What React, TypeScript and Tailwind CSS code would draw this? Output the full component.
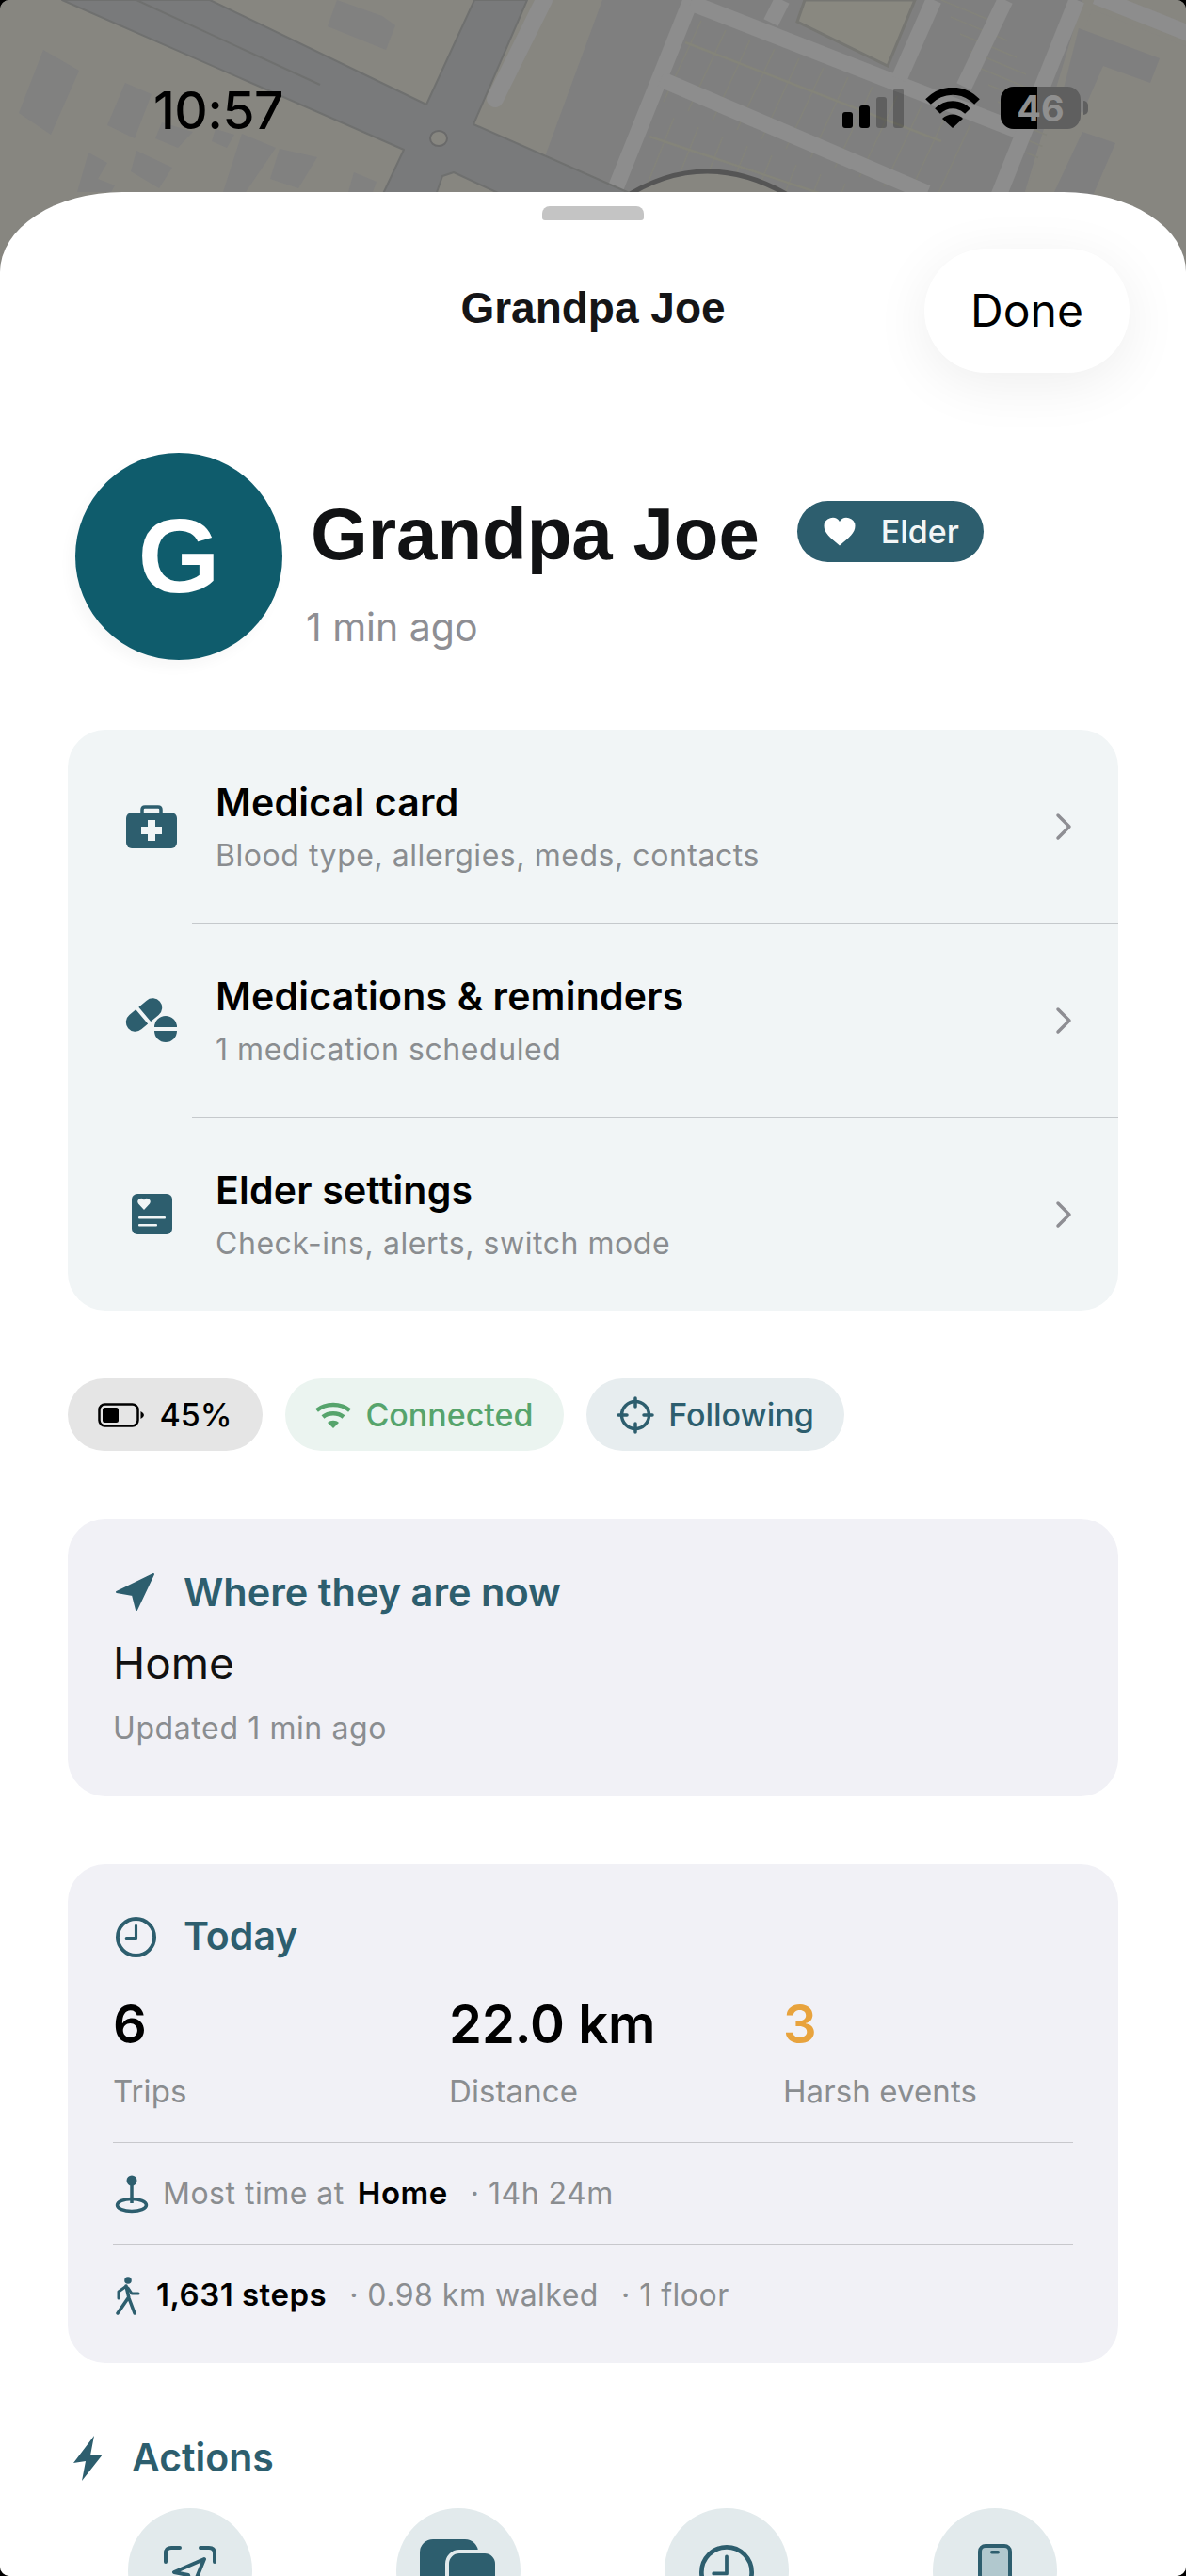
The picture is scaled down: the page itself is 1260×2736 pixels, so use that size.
import React from "react";

const TEAL = "#2d5e6e";

// Street map sitting behind the sheet, dimmed like a modal backdrop
function MapBackdrop() {
  const buildings = [
    "46,53 84,75 54,143 20,120",
    "133,88 161,100 143,147 114,133",
    "165,147 189,157 205,140 172,130",
    "257,142 293,157 261,204 237,204",
    "297,158 337,167 317,200 287,190",
    "145,160 183,178 169,200 139,182",
    "94,162 114,173 104,190 122,197 118,204 82,204",
    "376,183 400,193 396,204 370,204",
    "358,0 406,17 420,27 410,53 348,28",
    "229,137 249,143 241,157 225,150",
  ];
  const crossLines = Array.from({ length: 12 }, (_, i) => i);
  return (
    <svg className="absolute inset-0" width="1260" height="300" viewBox="0 0 1260 300">
      <rect width="1260" height="300" fill="#878680" />
      {buildings.map((points) => (
        <polygon key={points} points={points} fill="#818180" />
      ))}
      <polygon points="640,0 1150,0 1060,300 530,300" fill="#7f7f7f" />
      <polygon points="855,0 972,0 943,70 847,23" fill="#898880" stroke="#767672" strokeWidth="3" />
      {crossLines.map((i) => (
        <g key={i} stroke="#83837b" strokeWidth="1.5">
          <line x1={745 + i * 26} y1={22 + i * 10} x2={705 + i * 26} y2={108 + i * 10} />
          <line x1={690 + i * 26} y1={115 + i * 10} x2={650 + i * 26} y2={215 + i * 10} />
          <line x1={1000 + i * 10} y1={i * 18} x2={1060 + i * 10} y2={25 + i * 18} />
        </g>
      ))}
      <line x1="728" y1="45" x2="1000" y2="150" stroke="#84847a" strokeWidth="2.5" />
      <line x1="690" y1="145" x2="960" y2="235" stroke="#84847a" strokeWidth="2.5" />
      <g stroke="#8d8d8d" fill="none" strokeWidth="17">
        <path d="M734 0 L650 210" />
        <path d="M734 3 L1085 140" />
        <path d="M702 84 L985 205" />
        <path d="M831 0 L819 24" />
        <path d="M992 0 L955 84" />
        <path d="M1068 0 L1024 92" />
      </g>
      <polygon points="1160,10 1262,50 1262,300 1055,300" fill="#878680" />
      <polygon points="1146,30 1232,62 1222,88 1172,70 1150,120 1126,110" fill="#7f7f7f" />
      <polygon points="1150,140 1185,152 1160,210 1120,204" fill="#7f7f7f" />
      <path d="M1164 -4 L1264 36" stroke="#8d8d8d" strokeWidth="17" />
      <path d="M1144 0 L1060 210" stroke="#8d8d8d" strokeWidth="17" />
      <path
        d="M66 0 L429 159 L405 210 L462 210 L470 187 L482 183 L540 210 L680 210 L503 132 L560 0 L504 0 L453 111 L223 0 Z"
        fill="#797a7b"
        stroke="#6f706f"
        strokeWidth="2"
        strokeLinejoin="round"
      />
      <path d="M145 0 L340 90" stroke="#6f706f" strokeWidth="2" fill="none" />
      <path d="M578 0 L526 105" stroke="#8d8d8d" strokeWidth="18" strokeLinecap="round" />
      <ellipse cx="466" cy="147" rx="9" ry="8" fill="#878680" stroke="#6a6a6a" strokeWidth="2" />
      <path d="M660 212 Q750 152 845 212" fill="#878680" stroke="#555" strokeWidth="5" />
    </svg>
  );
}

function StatusBar() {
  return (
    <div className="relative flex h-[204px] items-start justify-between">
      <span className="mt-[85px] ml-[163px] text-[55px] leading-[64px] font-medium tracking-[-0.5px] text-black">
        10:57
      </span>
      <div className="mt-[92px] mr-[104px] flex items-start">
        <svg width="66" height="44" viewBox="0 0 66 44" className="mt-[1px]">
          <rect x="0" y="26" width="11" height="17" rx="3" fill="#000" />
          <rect x="18" y="19" width="11" height="24" rx="3" fill="#000" />
          <rect x="36" y="10" width="11" height="33" rx="3" fill="#000" fillOpacity="0.25" />
          <rect x="54" y="1" width="11" height="42" rx="3" fill="#000" fillOpacity="0.25" />
        </svg>
        <svg width="58" height="44" viewBox="0 0 58 44" className="mt-[1px] ml-[22px]">
          <g fill="none" stroke="#000" strokeWidth="8">
            <path d="M3 15 C18 0 40 0 55 15" />
            <path d="M13 25 C22 16 36 16 45 25" />
          </g>
          <path d="M18 33 C24 27 34 27 40 33 L29 43 Z" fill="#000" />
        </svg>
        <div className="relative ml-[22px] flex h-[45px] w-[85px] items-center justify-center overflow-hidden rounded-[14px] bg-[#5f5f5f]">
          <div className="absolute inset-y-0 left-0 w-[39px] bg-black" />
          <span className="relative text-[38px] leading-none font-bold text-[#8f8f8f]">46</span>
        </div>
        <div className="mt-[15px] ml-[3px] h-[15px] w-[5px] rounded-r-full bg-[#5f5f5f]" />
      </div>
    </div>
  );
}

function MedicalIcon() {
  return (
    <svg width="54" height="46" viewBox="0 0 54 46">
      <path d="M17 9 V5 Q17 2 20 2 H34 Q37 2 37 5 V9" fill="none" stroke={TEAL} strokeWidth="3.5" />
      <rect x="0" y="8" width="54" height="38" rx="6" fill={TEAL} />
      <path d="M23 16 H31 V23 H38 V31 H31 V38 H23 V31 H16 V23 H23 Z" fill="#f1f5f6" />
    </svg>
  );
}

function PillsIcon() {
  return (
    <svg width="56" height="48" viewBox="0 0 56 48">
      <g transform="rotate(-40 20 18)" fill={TEAL}>
        <path d="M17 8 H8 A10 10 0 0 0 8 28 H17 Z" />
        <path d="M21 8 H32 A10 10 0 0 1 32 28 H21 Z" />
      </g>
      <path d="M31 31 A12 12 0 0 1 55 31 Z" fill={TEAL} />
      <path d="M31 35 A12 12 0 0 0 55 35 Z" fill={TEAL} />
    </svg>
  );
}

function ElderCardIcon() {
  return (
    <svg width="43" height="43" viewBox="0 0 43 43">
      <rect width="43" height="43" rx="6" fill={TEAL} />
      <path d="M13 17 L7 10.5 A3.6 3.6 0 0 1 13 6.5 A3.6 3.6 0 0 1 19 10.5 Z" fill="#f1f5f6" />
      <rect x="7" y="24" width="29" height="2.5" rx="1" fill="#f1f5f6" />
      <rect x="7" y="32" width="20" height="2.5" rx="1" fill="#f1f5f6" />
    </svg>
  );
}

function Chevron() {
  return (
    <svg width="18" height="30" viewBox="0 0 18 30" fill="none" stroke="#8e8e93" strokeWidth="3.5" strokeLinecap="round" strokeLinejoin="round">
      <path d="M3 3 L15 15 L3 27" />
    </svg>
  );
}

function ClockIcon({ size, stroke }: { size: number; stroke: number }) {
  return (
    <svg width={size} height={size} viewBox="0 0 42 42" fill="none" stroke={TEAL} strokeWidth={stroke} strokeLinecap="round" strokeLinejoin="round">
      <circle cx="21" cy="21" r={21 - stroke / 2} />
      <path d="M21 9 V22 H11" strokeWidth={stroke * 0.8} />
    </svg>
  );
}

function MenuRow({ icon, title, detail }: { icon: React.ReactNode; title: string; detail: string }) {
  return (
    <div className="flex h-[205px] items-center">
      <div className="ml-[36px] flex w-[106px] justify-center">{icon}</div>
      <div className="ml-[15px] flex-1">
        <div className="mt-[1px] text-[41px] leading-[50px] font-semibold tracking-[0.2px] text-black">{title}</div>
        <div className="mt-[11px] text-[32px] leading-[42px] tracking-[0.55px] text-[#8a8d90]">{detail}</div>
      </div>
      <div className="mr-[49px]">
        <Chevron />
      </div>
    </div>
  );
}

const menuRows = [
  { icon: <MedicalIcon />, title: "Medical card", detail: "Blood type, allergies, meds, contacts" },
  { icon: <PillsIcon />, title: "Medications & reminders", detail: "1 medication scheduled" },
  { icon: <ElderCardIcon />, title: "Elder settings", detail: "Check-ins, alerts, switch mode" },
];

const stats = [
  { value: "6", label: "Trips", color: "text-black" },
  { value: "22.0 km", label: "Distance", color: "text-black" },
  { value: "3", label: "Harsh events", color: "text-[#e8a33d]" },
];

function ActionIcons() {
  return (
    <div className="mt-[28px] grid grid-cols-4 pr-[61px] pl-[59px]">
      <div className="flex h-[132px] w-[132px] justify-center justify-self-center rounded-full bg-[#e2eaec] pt-[40px]">
        <svg width="56" height="56" viewBox="0 0 56 56" fill="none" stroke={TEAL} strokeWidth="4" strokeLinecap="round" strokeLinejoin="round">
          <path d="M2 17 V8 Q2 2 8 2 H17" />
          <path d="M39 2 H48 Q54 2 54 8 V17" />
          <path d="M43 14 L11 28 L26 31 L30 46 Z" />
        </svg>
      </div>
      <div className="flex h-[132px] w-[132px] justify-center justify-self-center rounded-full bg-[#e2eaec] pt-[33px]">
        <svg width="82" height="70" viewBox="0 0 82 70">
          <rect x="0" y="0" width="62" height="60" rx="14" fill={TEAL} />
          <rect x="29" y="13" width="53" height="60" rx="13" fill={TEAL} stroke="#e2eaec" strokeWidth="4" />
        </svg>
      </div>
      <div className="flex h-[132px] w-[132px] justify-center justify-self-center rounded-full bg-[#e2eaec] pt-[39px]">
        <ClockIcon size={58} stroke={3.4} />
      </div>
      <div className="flex h-[132px] w-[132px] justify-center justify-self-center rounded-full bg-[#e2eaec] pt-[38px]">
        <svg width="36" height="62" viewBox="0 0 36 62">
          <rect x="2" y="2" width="32" height="58" rx="6" fill="#b1c8ce" stroke={TEAL} strokeWidth="4" />
          <rect x="13" y="7" width="10" height="3.5" rx="1.7" fill={TEAL} />
        </svg>
      </div>
    </div>
  );
}

export default function App() {
  return (
    <div className="h-[2736px] w-[1260px] overflow-hidden bg-black font-['Inter',sans-serif]">
      <div className="relative h-full overflow-hidden rounded-[10px] bg-[#878680]">
        <MapBackdrop />
        <StatusBar />
        <div className="relative h-[2532px] rounded-t-[130px_85px] bg-white">
          <div className="mx-auto h-[15px] w-[108px] translate-y-[15px] rounded-t-[8px] rounded-b-[3px] bg-[#c4c4c4]" />

          <div className="mt-[45px] grid h-[132px] grid-cols-[1fr_auto_1fr] items-center">
            <div />
            <h2 className="-mt-[6px] font-['Liberation_Sans',sans-serif] text-[46px] font-bold text-[#151517]">Grandpa Joe</h2>
            <button className="mr-[60px] h-[132px] w-[218px] justify-self-end rounded-[66px] bg-white text-[48px] text-black shadow-[0_12px_60px_rgba(0,0,0,0.07)]">
              Done
            </button>
          </div>

          <div className="mt-[85px] ml-[80px] flex items-start">
            <div className="flex h-[220px] w-[220px] items-center justify-center rounded-full bg-[#0f5c6c] font-['Liberation_Sans',sans-serif] text-[112px] font-bold text-white shadow-[-6px_8px_14px_rgba(0,0,0,0.03)]">
              G
            </div>
            <div className="ml-[30px] pt-[46px]">
              <div className="flex items-center">
                <h1 className="font-['Liberation_Sans',sans-serif] text-[78px] leading-[80px] font-bold text-[#111214]">Grandpa Joe</h1>
                <div className="ml-[40px] -mt-[6px] flex h-[65px] w-[198px] items-center justify-center rounded-full bg-[#2d5e6e] text-[34px] font-medium text-[#f2f6f7]">
                  <svg width="38" height="33" viewBox="0 0 24 22" fill="#fff" className="mr-[25px]">
                    <path d="M12 21 C5 15 1 12 1 7 A6 6 0 0 1 12 4 A6 6 0 0 1 23 7 C23 12 19 15 12 21 Z" />
                  </svg>
                  Elder
                </div>
              </div>
              <div className="mt-[34px] -ml-[5px] text-[41px] leading-[50px] text-[#8e8e93]">1 min ago</div>
            </div>
          </div>

          <div className="mx-[72px] mt-[74px] rounded-[40px] bg-[#f1f5f6]">
            {menuRows.map((row, index) => (
              <div key={row.title}>
                {index > 0 && <div className="ml-[132px] h-px bg-[#c5c9cc]" />}
                <MenuRow {...row} />
              </div>
            ))}
          </div>

          <div className="mx-[72px] mt-[72px] flex gap-[24px] text-[34px] font-medium">
            <div className="flex h-[77px] w-[207px] items-center justify-center rounded-full bg-[#e5e5e5] text-black">
              <svg width="50" height="26" viewBox="0 0 50 26" className="mr-[15px]">
                <rect x="1.5" y="1.5" width="41" height="23" rx="6" fill="none" stroke="#000" strokeWidth="2.5" />
                <rect x="5" y="5" width="17" height="16" rx="2.5" fill="#000" />
                <path d="M45.5 9 Q49 11 49 13 Q49 15 45.5 17 Z" fill="#000" />
              </svg>
              45%
            </div>
            <div className="flex h-[77px] w-[296px] items-center justify-center rounded-full bg-[#ebf4f0] text-[#56a46c]">
              <svg width="38" height="30" viewBox="0 0 38 30" className="mr-[15px]">
                <g fill="none" stroke="#56a46c" strokeWidth="4.5">
                  <path d="M1.5 10 C11 2 27 2 36.5 10" />
                  <path d="M8 17 C14 12 24 12 30 17" />
                </g>
                <path d="M13 23 C16 20 22 20 25 23 L19 29 Z" fill="#56a46c" />
              </svg>
              Connected
            </div>
            <div className="flex h-[77px] w-[274px] items-center justify-center rounded-full bg-[#e7edef] text-[#2d5e6e]">
              <svg width="40" height="40" viewBox="0 0 40 40" fill="none" stroke={TEAL} strokeWidth="3.5" strokeLinecap="round" className="mr-[15px]">
                <circle cx="20" cy="20" r="14.5" />
                <path d="M20 2 V11 M20 29 V38 M2 20 H11 M29 20 H38" />
              </svg>
              Following
            </div>
          </div>

          <div className="mx-[72px] mt-[72px] h-[295px] rounded-[40px] bg-[#f1f1f6] px-[48px] pt-[54px]">
            <div className="flex h-[48px] items-center text-[41.5px] font-semibold text-[#2d5e6e]">
              <svg width="44" height="42" viewBox="0 0 44 42" fill={TEAL} stroke={TEAL} strokeWidth="2" strokeLinejoin="round" className="mr-[29px] ml-[2px]">
                <path d="M2 21 L41 2 L23 40 L19 24 Z" />
              </svg>
              Where they are now
            </div>
            <div className="mt-[26px] text-[46px] leading-[50px] text-[#111]">Home</div>
            <div className="mt-[22px] text-[32px] leading-[46px] tracking-[0.6px] text-[#8a8d90]">Updated 1 min ago</div>
          </div>

          <div className="mx-[72px] mt-[72px] h-[530px] rounded-[40px] bg-[#f1f1f6] px-[48px] pt-[52px]">
            <div className="flex h-[50px] items-center text-[41px] font-semibold text-[#2d5e6e]">
              <div className="mr-[29px] ml-[3px]">
                <ClockIcon size={43} stroke={3.8} />
              </div>
              Today
            </div>
            <div className="mt-[33px] grid grid-cols-[357px_355px_1fr]">
              {stats.map((stat) => (
                <div key={stat.label}>
                  <div className={`text-[56px] leading-[70px] font-semibold ${stat.color}`}>{stat.value}</div>
                  <div className="mt-[14px] text-[33px] leading-[44px] tracking-[0.1px] text-[#8a8d90]">{stat.label}</div>
                </div>
              ))}
            </div>
            <div className="mt-[32px] h-px bg-[#c8c8cc]" />
            <div className="flex h-[107px] items-center text-[32px] tracking-[0.5px] text-[#8a8d90]">
              <svg width="36" height="42" viewBox="0 0 36 42" fill="none" stroke={TEAL} strokeWidth="3.5" className="mr-[15px] ml-[2px]">
                <circle cx="18" cy="7" r="5.5" fill={TEAL} stroke="none" />
                <path d="M18 12 V31" />
                <ellipse cx="18" cy="33" rx="15.5" ry="6.5" />
              </svg>
              Most time at
              <span className="ml-[14px] text-[33px] font-semibold text-black">Home</span>
              <span className="ml-[24px]">· 14h 24m</span>
            </div>
            <div className="h-px bg-[#c8c8cc]" />
            <div className="flex h-[107px] items-center text-[32px] tracking-[0.5px] text-[#8a8d90]">
              <svg width="26" height="42" viewBox="0 0 26 42" fill="none" stroke={TEAL} strokeWidth="3" strokeLinecap="round" strokeLinejoin="round" className="mr-[17px] ml-[3px]">
                <circle cx="13" cy="5" r="3.8" fill={TEAL} stroke="none" />
                <path d="M11 11 L14 24 L20 40 M13 24 L2 40" strokeWidth="3.5" />
                <path d="M10 12 L3 17 L3 24 M13 13 L17 19 L24 19" />
              </svg>
              <span className="text-[33px] font-semibold text-black">1,631 steps</span>
              <span className="ml-[24px]">· 0.98 km walked</span>
              <span className="ml-[24px]">· 1 floor</span>
            </div>
          </div>

          <div className="mt-[76px] ml-[78px] flex h-[50px] items-center text-[41px] font-semibold text-[#2d5e6e]">
            <svg width="32" height="48" viewBox="0 0 32 48" fill={TEAL} className="mr-[30px]">
              <path d="M22 0 L0 29 L13 27 L9 48 L31 20 L18 21 Z" />
            </svg>
            Actions
          </div>
          <ActionIcons />
        </div>
      </div>
    </div>
  );
}
